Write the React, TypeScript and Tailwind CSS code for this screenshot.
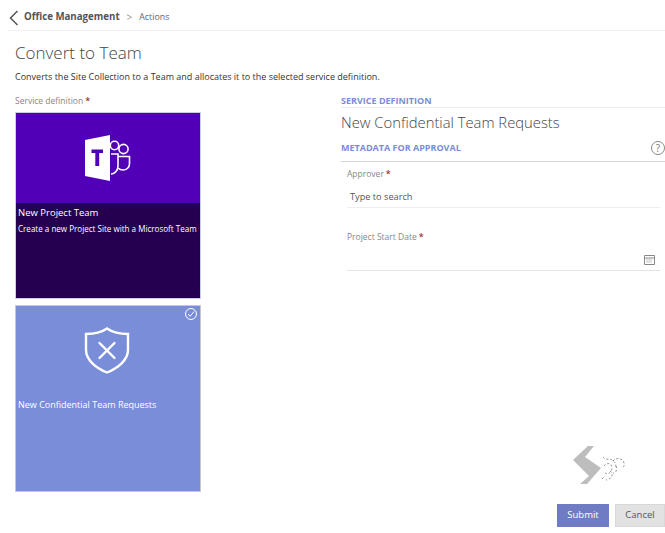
const font = { fontFamily: '"Open Sans", sans-serif' };

const TeamsIcon = () => (
  <svg width="46" height="46" viewBox="0 0 46 46" fill="none">
    <path d="M0 5 L25 0 V46 L0 41 Z" fill="#fff" />
    <path d="M6.5 14.5 H18 V18 H14.2 V31 H10.3 V18 H6.5 Z" fill="#5200b8" />
    <circle cx="29.5" cy="10.5" r="4.2" stroke="#fff" strokeWidth="1.6" />
    <circle cx="38.5" cy="14" r="4.6" stroke="#fff" strokeWidth="1.6" />
    <path d="M26 19 H33 V31 C33 36 29 39 26 39" stroke="#fff" strokeWidth="1.6" />
    <path d="M33 21.5 H44.5 V29 C44.5 33 41 35 38 35 C36 35 34 34 33 33" stroke="#fff" strokeWidth="1.6" />
  </svg>
);

const ShieldIcon = () => (
  <svg width="46" height="47" viewBox="0 0 46 47" fill="none" stroke="#fff" strokeWidth="2.4">
    <path d="M23 1.5 C28 5 35 7 44 7 V23 C44 33 34 41 23 45.5 C12 41 2 33 2 23 V7 C11 7 18 5 23 1.5 Z" />
    <path d="M15.5 16 L30.5 31 M30.5 16 L15.5 31" strokeLinecap="round" />
  </svg>
);

const Logo = () => (
  <svg width="54" height="38" viewBox="0 0 54 38" fill="none">
    <path d="M15 0 H21 L12 11 L28 22 L14 38 H7 L16 30 L0 14 Z" fill="#bdbdbd" />
    <g stroke="#8f8f8f" strokeWidth="1" strokeDasharray="2 2">
      <path d="M31 20 C34 16 39 17 39 22 C39 26 35 29 32 27" />
      <path d="M40 15 C43 11 50 12 51 17 C52 20 50 22 48 21" />
      <path d="M30 11 C33 15 37 12 39 14 C42 16 44 18 42 21" />
      <path d="M37 25 C41 28 39 33 33 34" />
      <path d="M29 33 L32 30" />
      <path d="M43 20 C45 24 42 28 40 27" />
    </g>
  </svg>
);

const Req = () => <span className="ml-[2px] text-[9px] leading-[10px] font-semibold text-[#933]">*</span>;

export default function App() {
  return (
    <div className="w-[665px] h-[533px] overflow-hidden bg-white text-[#333]" style={font}>
      <div className="h-[31px] ml-[8px] flex items-center border-b border-[#f0f0f0] pt-[5px]">
        <svg width="12" height="18" viewBox="0 0 12 18" fill="none" stroke="#555" strokeWidth="1.5">
          <path d="M9.5 2 L2.5 9 L9.5 16" />
        </svg>
        <span className="ml-[4px] text-[9.7px] font-bold text-[#555]">Office Management</span>
        <span className="ml-[7px] text-[10px] text-[#999]">&gt;</span>
        <span className="ml-[7px] text-[8.8px] text-[#666]">Actions</span>
      </div>

      <div className="pl-[15px]">
        <h1 className="mt-[10px] text-[17px] leading-[24px] font-light text-[#444]">Convert to Team</h1>
        <p className="mt-[5px] text-[9px] leading-[14px] text-[#333]">
          Converts the Site Collection to a Team and allocates it to the selected service definition.
        </p>

        <div className="mt-[11px] flex">
          <div className="w-[186px] shrink-0">
            <div className="h-[12px] text-[8.5px] leading-[12px] text-[#888] mb-[5px]">
              Service definition<Req />
            </div>
            <div className="h-[187px] flex flex-col border border-[#c9cfe8] bg-[#5200b8]">
              <div className="h-[90px] flex items-center justify-center">
                <TeamsIcon />
              </div>
              <div className="flex-1 bg-[#250050] pl-[2px] pt-[3px] text-white">
                <div className="text-[9.5px] leading-[14px]">New Project Team</div>
                <div className="mt-[3px] text-[8.05px] leading-[12px] whitespace-nowrap">Create a new Project Site with a Microsoft Team</div>
              </div>
            </div>
            <div className="relative mt-[6px] h-[187px] border border-[#c8c8c8] bg-[#7a8dd8] text-white">
              <div className="absolute top-[2px] right-[3px] w-[12px] h-[12px] rounded-full border border-white flex items-center justify-center">
                <svg width="8" height="8" viewBox="0 0 8 8" fill="none" stroke="#fff" strokeWidth="1"><path d="M1 4.2 L3.2 6.2 L7 1.5" /></svg>
              </div>
              <div className="h-[88px] pr-[3px] flex items-center justify-center">
                <ShieldIcon />
              </div>
              <div className="pl-[2px] pt-[4px] text-[9px] leading-[14px]">New Confidential Team Requests</div>
            </div>
          </div>

          <div className="ml-[140px] flex-1 min-w-0">
            <div className="h-[14px] -mt-[1px] pt-[1px] border-b border-[#ececec] text-[9px] leading-[11px] font-bold text-[#7a8dd8]">SERVICE DEFINITION</div>
            <div className="mt-[4px] text-[14.8px] leading-[20px] font-light text-[#444]">New Confidential Team Requests</div>
            <div className="mt-[5px] h-[25px] flex items-center justify-between border-b border-[#d4d4d4] pb-[3px]">
              <span className="text-[9px] font-bold text-[#7a8dd8]">METADATA FOR APPROVAL</span>
              <span className="w-[14px] h-[14px] rounded-full border border-[#888] text-[10px] leading-[12px] text-center text-[#777]">?</span>
            </div>
            <div className="pl-[6px] mr-[5px]">
              <div className="h-[12px] mt-[6px] text-[8.5px] leading-[12px] text-[#888]">Approver<Req /></div>
              <div className="mt-[10px] h-[18px] pl-[3px] border-b border-[#eee] text-[9.2px] leading-[14px] text-[#555]">Type to search</div>
              <div className="h-[12px] mt-[23px] text-[8.5px] leading-[12px] text-[#888]">Project Start Date<Req /></div>
              <div className="mt-[6px] h-[22px] flex items-center justify-end pr-[5px] border-b border-[#e4e4e4]">
                <svg width="11" height="10" viewBox="0 0 11 10" fill="none" stroke="#888" strokeWidth="1"><path d="M.5.5h10v9H.5z M.5 3h10" /><path d="M2.5 5h6M2.5 7h6" strokeDasharray="1 1" /></svg>
              </div>
            </div>
            <div className="mt-[175px] ml-[232px]">
              <Logo />
            </div>
            <div className="mt-[20px] flex justify-end gap-[6px]">
              <button className="w-[52px] h-[23px] bg-[#6f7cc4] text-white text-[9.5px]">Submit</button>
              <button className="w-[50px] h-[23px] bg-[#e2e2e2] border border-[#d8d8d8] text-[#555] text-[9.5px]">Cancel</button>
            </div>
          </div>
        </div>
      </div>
    </div>
  );
}
